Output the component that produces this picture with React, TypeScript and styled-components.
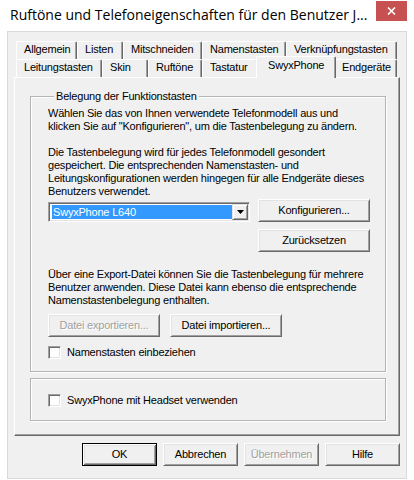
import React from "react";
import styled, { createGlobalStyle, css } from "styled-components";

const GlobalStyle = createGlobalStyle`
  html, body { margin: 0; padding: 0; background: #ffffff; }
  body {
    font-family: "Liberation Sans", Arial, sans-serif;
    font-size: 11px;
    letter-spacing: -0.2px;
    color: #000;
  }
  * { box-sizing: border-box; }
`;

const Window = styled.div`
  width: 414px;
  height: 480px;
  background: #ffffff;
  display: flex;
  flex-direction: column;
  overflow: hidden;
`;

const TitleBar = styled.div`
  height: 31px;
  flex-shrink: 0;
  display: flex;
  align-items: flex-start;
`;

const Title = styled.div`
  font-family: "Open Sans", "Noto Sans", sans-serif;
  font-size: 14px;
  line-height: 19px;
  letter-spacing: 0;
  color: #000;
  padding: 5px 0 0 10px;
  white-space: nowrap;
`;

const CloseButton = styled.div`
  margin-left: auto;
  margin-right: 7px;
  margin-top: 1px;
  width: 31px;
  height: 20px;
  background: #c75050;
  display: flex;
  align-items: center;
  justify-content: center;
`;

const Client = styled.div`
  flex: 1;
  margin: 0 7px 1px 7px;
  background: #f0f0f0;
  border: 1px solid #d9d9d9;
  padding: 9px 6px 0 6px;
  display: flex;
  flex-direction: column;
`;

const TabRow = styled.div`
  display: flex;
  align-items: flex-end;
  height: 18px;
  padding-left: 2px;
`;

const Tab = styled.div<{ $active?: boolean }>`
  flex-shrink: 0;
  height: 18px;
  background: #f0f0f0;
  border-top: 1px solid #ffffff;
  border-left: 1px solid #ffffff;
  border-right: 1px solid #696969;
  border-radius: 2px 2px 0 0;
  box-shadow: inset -1px 0 #a0a0a0;
  padding: 1px 0 0 7px;
  line-height: 13px;
  white-space: nowrap;
  ${(p) =>
    p.$active &&
    css`
      position: relative;
      z-index: 1;
      height: 22px;
      margin: 0 -2px -1px -2px;
      padding: 2px 0 0 11px;
    `}
`;

const Panel = styled.div`
  height: 359px;
  border-top: 1px solid #ffffff;
  border-left: 1px solid #ffffff;
  border-right: 1px solid #696969;
  border-bottom: 1px solid #696969;
  box-shadow: inset -1px -1px #a0a0a0;
  padding: 12px 13px 0 15px;
  display: flex;
  flex-direction: column;
`;

const GroupBox = styled.fieldset<{ $height?: number }>`
  margin: 0;
  min-width: 0;
  border: 1px solid #b4b4b4;
  box-shadow: inset 1px 1px #ffffff, 1px 1px #ffffff;
  padding: 0 0 12px 17px;
  ${(p) =>
    p.$height &&
    css`
      height: ${p.$height}px;
      padding: 15px 0 0 17px;
      margin-top: 6px;
    `}
`;

const Legend = styled.legend`
  margin-left: 6px;
  padding: 0 2px 0 2px;
  line-height: 13px;
  background: #f0f0f0;
`;

const GroupContent = styled.div`
  padding-top: 4px;
  display: flex;
  flex-direction: column;
`;

const Text = styled.p<{ $mt?: number }>`
  margin: ${(p) => p.$mt ?? 0}px 0 0 0;
  line-height: 13px;
`;

const ComboRow = styled.div`
  display: flex;
  align-items: flex-start;
  gap: 8px;
  margin-top: 1px;
`;

const Combo = styled.div`
  width: 202px;
  height: 20px;
  margin-top: 3px;
  background: #ffffff;
  border-top: 1px solid #a0a0a0;
  border-left: 1px solid #a0a0a0;
  border-right: 1px solid #ffffff;
  border-bottom: 1px solid #ffffff;
  box-shadow: inset 1px 1px #696969, inset -1px -1px #e3e3e3;
  padding: 1px 1px 1px 1px;
  display: flex;
`;

const ComboValue = styled.div`
  flex: 1;
  margin: 1px 0 1px 2px;
  background: #3399ff;
  color: #ffffff;
  padding-left: 1px;
  line-height: 14px;
  white-space: nowrap;
`;

const ComboArrow = styled.div`
  width: 16px;
  background: #f0f0f0;
  border-top: 1px solid #e3e3e3;
  border-left: 1px solid #e3e3e3;
  border-right: 1px solid #696969;
  border-bottom: 1px solid #696969;
  box-shadow: inset 1px 1px #ffffff, inset -1px -1px #a0a0a0;
  display: flex;
  align-items: center;
  justify-content: center;
`;

const Button = styled.div<{ $w?: number; $disabled?: boolean; $default?: boolean }>`
  width: ${(p) => p.$w ?? 112}px;
  height: 23px;
  flex-shrink: 0;
  background: #f0f0f0;
  border-top: 1px solid #ffffff;
  border-left: 1px solid #ffffff;
  border-right: 1px solid #696969;
  border-bottom: 1px solid #696969;
  box-shadow: inset 1px 1px #e3e3e3, inset -1px -1px #a0a0a0;
  display: flex;
  align-items: center;
  justify-content: center;
  padding-bottom: 1px;
  line-height: 13px;
  white-space: nowrap;
  color: ${(p) => (p.$disabled ? "#a0a0a0" : "#000")};
  ${(p) =>
    p.$disabled &&
    css`
      text-shadow: 1px 1px 0 #ffffff;
    `}
  ${(p) =>
    p.$default &&
    css`
      border: 1px solid #000;
      box-shadow: inset 1px 1px #ffffff, inset -1px -1px #696969,
        inset 2px 2px #e3e3e3, inset -2px -2px #a0a0a0;
    `}
`;

const ResetRow = styled.div`
  margin: 7px 0 0 210px;
`;

const ButtonRow = styled.div<{ $mt: number; $gap: number; $end?: boolean }>`
  display: flex;
  gap: ${(p) => p.$gap}px;
  margin-top: ${(p) => p.$mt}px;
  justify-content: ${(p) => (p.$end ? "flex-end" : "flex-start")};
`;

const CheckRow = styled.label<{ $mt?: number }>`
  display: flex;
  align-items: center;
  gap: 6px;
  height: 13px;
  margin-top: ${(p) => p.$mt ?? 0}px;
  line-height: 13px;
`;

const CheckBox = styled.span`
  width: 13px;
  height: 13px;
  flex-shrink: 0;
  background: #ffffff;
  border-top: 1px solid #a0a0a0;
  border-left: 1px solid #a0a0a0;
  border-right: 1px solid #ffffff;
  border-bottom: 1px solid #ffffff;
  box-shadow: inset 1px 1px #696969, inset -1px -1px #e3e3e3;
`;

const row1: [string, number][] = [
  ["Allgemein", 61],
  ["Listen", 46],
  ["Mitschneiden", 79],
  ["Namenstasten", 84],
  ["Verknüpfungstasten", 111],
];

const row2: [string, number, boolean?][] = [
  ["Leitungstasten", 86],
  ["Skin", 46],
  ["Ruftöne", 54],
  ["Tastatur", 56],
  ["SwyxPhone", 80, true],
  ["Endgeräte", 63],
];

export default function App() {
  return (
    <>
      <GlobalStyle />
      <Window>
        <TitleBar>
          <Title>Ruftöne und Telefoneigenschaften für den Benutzer J...</Title>
          <CloseButton>
            <svg width="9" height="8" viewBox="0 0 9 8">
              <path d="M1 0.5 L8 7.5 M8 0.5 L1 7.5" stroke="#fff" strokeWidth="1.6" />
            </svg>
          </CloseButton>
        </TitleBar>
        <Client>
          <TabRow>
            {row1.map(([label, w]) => (
              <Tab key={label} style={{ width: w }}>
                {label}
              </Tab>
            ))}
          </TabRow>
          <TabRow>
            {row2.map(([label, w, active]) => (
              <Tab key={label} $active={active} style={{ width: w }}>
                {label}
              </Tab>
            ))}
          </TabRow>
          <Panel>
            <GroupBox>
              <Legend>Belegung der Funktionstasten</Legend>
              <GroupContent>
                <Text>
                  Wählen Sie das von Ihnen verwendete Telefonmodell aus und
                  <br />
                  klicken Sie auf "Konfigurieren", um die Tastenbelegung zu ändern.
                </Text>
                <Text $mt={13}>
                  Die Tastenbelegung wird für jedes Telefonmodell gesondert
                  <br />
                  gespeichert. Die entsprechenden Namenstasten- und
                  <br />
                  Leitungskonfigurationen werden hingegen für alle Endgeräte dieses
                  <br />
                  Benutzers verwendet.
                </Text>
                <ComboRow>
                  <Combo>
                    <ComboValue>SwyxPhone L640</ComboValue>
                    <ComboArrow>
                      <svg width="7" height="4" viewBox="0 0 7 4">
                        <path d="M0 0 H7 L3.5 4 Z" fill="#000" />
                      </svg>
                    </ComboArrow>
                  </Combo>
                  <Button>Konfigurieren...</Button>
                </ComboRow>
                <ResetRow>
                  <Button>Zurücksetzen</Button>
                </ResetRow>
                <Text $mt={16}>
                  Über eine Export-Datei können Sie die Tastenbelegung für mehrere
                  <br />
                  Benutzer anwenden. Diese Datei kann ebenso die entsprechende
                  <br />
                  Namenstastenbelegung enthalten.
                </Text>
                <ButtonRow $mt={7} $gap={10}>
                  <Button $disabled>Datei exportieren...</Button>
                  <Button>Datei importieren...</Button>
                </ButtonRow>
                <CheckRow $mt={9}>
                  <CheckBox />
                  Namenstasten einbeziehen
                </CheckRow>
              </GroupContent>
            </GroupBox>
            <GroupBox $height={43}>
              <CheckRow>
                <CheckBox />
                SwyxPhone mit Headset verwenden
              </CheckRow>
            </GroupBox>
          </Panel>
          <ButtonRow $mt={7} $gap={6} $end>
            <Button $w={75} $default>
              OK
            </Button>
            <Button $w={75}>Abbrechen</Button>
            <Button $w={75} $disabled>
              Übernehmen
            </Button>
            <Button $w={75}>Hilfe</Button>
          </ButtonRow>
        </Client>
      </Window>
    </>
  );
}
